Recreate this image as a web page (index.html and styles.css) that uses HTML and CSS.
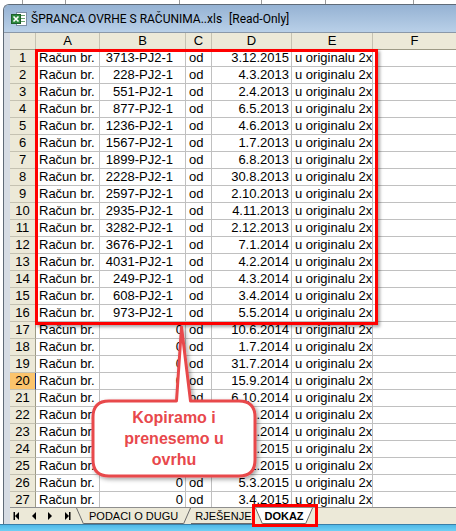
FILE: index.html
```html
<!DOCTYPE html>
<html lang="hr">
<head>
<meta charset="utf-8">
<title>ŠPRANCA OVRHE S RAČUNIMA..xls</title>
<link rel="stylesheet" href="styles.css">
</head>
<body>
<div class="backdrop">
  <div class="bk" style="width:23px"></div>
  <div class="bk" style="width:43px"></div>
  <div class="bk" style="width:114px"></div>
  <div class="bk" style="width:82px"></div>
  <div class="bk" style="width:64px"></div>
  <div class="bk" style="width:88px"></div>
</div>
<div class="window">
  <div class="titlebar">
    <svg class="xlicon" width="16" height="16" viewBox="0 0 16 16">
      <rect x="5.5" y="1.5" width="10" height="13" fill="#fff" stroke="#7d8fa6"/>
      <line x1="10" y1="4.5" x2="14" y2="4.5" stroke="#6aa36f"/>
      <line x1="10" y1="7.5" x2="14" y2="7.5" stroke="#6aa36f"/>
      <line x1="10" y1="10.5" x2="14" y2="10.5" stroke="#6aa36f"/>
      <rect x="0.5" y="3.5" width="9" height="9" fill="#2d8a3e" stroke="#1d5f2a"/>
      <path d="M2.5 5.5 L7.5 10.5 M7.5 5.5 L2.5 10.5" stroke="#fff" stroke-width="1.6"/>
    </svg>
    <span class="ttl">ŠPRANCA OVRHE S RAČUNIMA..xls</span>
    <span class="ro">[Read-Only]</span>
  </div>
  <div class="inner">
    <div class="sheet">
      <div class="h corner"></div><div class="h">A</div><div class="h">B</div><div class="h">C</div><div class="h">D</div><div class="h">E</div><div class="h last">F</div>

      <div class="rh">1</div><div class="c">Račun br.</div><div class="c r pr">3713-PJ2-1</div><div class="c">od</div><div class="c r">3.12.2015</div><div class="c">u originalu 2x</div><div class="c last"></div>
      <div class="rh">2</div><div class="c">Račun br.</div><div class="c r pr">228-PJ2-1</div><div class="c">od</div><div class="c r">4.3.2013</div><div class="c">u originalu 2x</div><div class="c last"></div>
      <div class="rh">3</div><div class="c">Račun br.</div><div class="c r pr">551-PJ2-1</div><div class="c">od</div><div class="c r">2.4.2013</div><div class="c">u originalu 2x</div><div class="c last"></div>
      <div class="rh">4</div><div class="c">Račun br.</div><div class="c r pr">877-PJ2-1</div><div class="c">od</div><div class="c r">6.5.2013</div><div class="c">u originalu 2x</div><div class="c last"></div>
      <div class="rh">5</div><div class="c">Račun br.</div><div class="c r pr">1236-PJ2-1</div><div class="c">od</div><div class="c r">4.6.2013</div><div class="c">u originalu 2x</div><div class="c last"></div>
      <div class="rh">6</div><div class="c">Račun br.</div><div class="c r pr">1567-PJ2-1</div><div class="c">od</div><div class="c r">1.7.2013</div><div class="c">u originalu 2x</div><div class="c last"></div>
      <div class="rh">7</div><div class="c">Račun br.</div><div class="c r pr">1899-PJ2-1</div><div class="c">od</div><div class="c r">6.8.2013</div><div class="c">u originalu 2x</div><div class="c last"></div>
      <div class="rh">8</div><div class="c">Račun br.</div><div class="c r pr">2228-PJ2-1</div><div class="c">od</div><div class="c r">30.8.2013</div><div class="c">u originalu 2x</div><div class="c last"></div>
      <div class="rh">9</div><div class="c">Račun br.</div><div class="c r pr">2597-PJ2-1</div><div class="c">od</div><div class="c r">2.10.2013</div><div class="c">u originalu 2x</div><div class="c last"></div>
      <div class="rh">10</div><div class="c">Račun br.</div><div class="c r pr">2935-PJ2-1</div><div class="c">od</div><div class="c r">4.11.2013</div><div class="c">u originalu 2x</div><div class="c last"></div>
      <div class="rh">11</div><div class="c">Račun br.</div><div class="c r pr">3282-PJ2-1</div><div class="c">od</div><div class="c r">2.12.2013</div><div class="c">u originalu 2x</div><div class="c last"></div>
      <div class="rh">12</div><div class="c">Račun br.</div><div class="c r pr">3676-PJ2-1</div><div class="c">od</div><div class="c r">7.1.2014</div><div class="c">u originalu 2x</div><div class="c last"></div>
      <div class="rh">13</div><div class="c">Račun br.</div><div class="c r pr">4031-PJ2-1</div><div class="c">od</div><div class="c r">4.2.2014</div><div class="c">u originalu 2x</div><div class="c last"></div>
      <div class="rh">14</div><div class="c">Račun br.</div><div class="c r pr">249-PJ2-1</div><div class="c">od</div><div class="c r">4.3.2014</div><div class="c">u originalu 2x</div><div class="c last"></div>
      <div class="rh">15</div><div class="c">Račun br.</div><div class="c r pr">608-PJ2-1</div><div class="c">od</div><div class="c r">3.4.2014</div><div class="c">u originalu 2x</div><div class="c last"></div>
      <div class="rh">16</div><div class="c">Račun br.</div><div class="c r pr">973-PJ2-1</div><div class="c">od</div><div class="c r">5.5.2014</div><div class="c">u originalu 2x</div><div class="c last"></div>
      <div class="rh">17</div><div class="c">Račun br.</div><div class="c r">0</div><div class="c">od</div><div class="c r">10.6.2014</div><div class="c">u originalu 2x</div><div class="c last"></div>
      <div class="rh">18</div><div class="c">Račun br.</div><div class="c r">0</div><div class="c">od</div><div class="c r">1.7.2014</div><div class="c">u originalu 2x</div><div class="c last"></div>
      <div class="rh">19</div><div class="c">Račun br.</div><div class="c r">0</div><div class="c">od</div><div class="c r">31.7.2014</div><div class="c">u originalu 2x</div><div class="c last"></div>
      <div class="rh sel">20</div><div class="c">Račun br.</div><div class="c r">0</div><div class="c">od</div><div class="c r">15.9.2014</div><div class="c">u originalu 2x</div><div class="c last"></div>
      <div class="rh">21</div><div class="c">Račun br.</div><div class="c r">0</div><div class="c">od</div><div class="c r">6.10.2014</div><div class="c">u originalu 2x</div><div class="c last"></div>
      <div class="rh">22</div><div class="c">Račun br.</div><div class="c r">0</div><div class="c">od</div><div class="c r">4.11.2014</div><div class="c">u originalu 2x</div><div class="c last"></div>
      <div class="rh">23</div><div class="c">Račun br.</div><div class="c r">0</div><div class="c">od</div><div class="c r">2.12.2014</div><div class="c">u originalu 2x</div><div class="c last"></div>
      <div class="rh">24</div><div class="c">Račun br.</div><div class="c r">0</div><div class="c">od</div><div class="c r">7.1.2015</div><div class="c">u originalu 2x</div><div class="c last"></div>
      <div class="rh">25</div><div class="c">Račun br.</div><div class="c r">0</div><div class="c">od</div><div class="c r">4.2.2015</div><div class="c">u originalu 2x</div><div class="c last"></div>
      <div class="rh">26</div><div class="c">Račun br.</div><div class="c r">0</div><div class="c">od</div><div class="c r">5.3.2015</div><div class="c">u originalu 2x</div><div class="c last"></div>
      <div class="rh">27</div><div class="c">Račun br.</div><div class="c r">0</div><div class="c">od</div><div class="c r">3.4.2015</div><div class="c">u originalu 2x</div><div class="c last"></div>
    </div>
    <div class="tabbar">
      <svg class="nav" width="66" height="16" viewBox="0 0 66 16">
        <rect x="3.5" y="4" width="1.5" height="8" fill="#000"/>
        <path d="M9 4 L9 12 L5 8 Z" fill="#000"/>
        <path d="M26 4 L26 12 L22 8 Z" fill="#000"/>
        <path d="M38 4 L38 12 L42 8 Z" fill="#000"/>
        <path d="M55 4 L55 12 L59 8 Z" fill="#000"/>
        <rect x="59" y="4" width="1.5" height="8" fill="#000"/>
      </svg>
      <svg class="edge" width="8" height="16" viewBox="0 0 8 16"><path d="M0.5 0 L7.5 16" stroke="#6b6b6b" fill="none"/></svg>
      <span class="tab t1">PODACI O DUGU</span>
      <svg class="edge" width="8" height="16" viewBox="0 0 8 16"><path d="M0.5 16 L7.5 0" stroke="#6b6b6b" fill="none"/></svg>
      <span class="tab t2">RJEŠENJE</span>
      <svg class="edge" width="8" height="16" viewBox="0 0 8 16"><path d="M0 0 L8 0 L8 16 Z" fill="#fff"/><path d="M0.5 0 L7.5 16" stroke="#6b6b6b" fill="none"/></svg>
      <span class="tab active">DOKAZ</span>
      <svg class="edge" width="8" height="16" viewBox="0 0 8 16"><path d="M0 0 L8 0 L0 16 Z" fill="#fff"/><path d="M0.5 16 L7.5 0" stroke="#6b6b6b" fill="none"/></svg>
    </div>
  </div>
</div>
<div class="bottombar"></div>

<div class="redbox"></div>
<div class="redtab"></div>

<svg class="callout-shape" width="456" height="531" viewBox="0 0 456 531">
  <defs>
    <filter id="sh" x="-10%" y="-10%" width="130%" height="130%">
      <feDropShadow dx="2" dy="2" stdDeviation="2" flood-color="#000" flood-opacity="0.35"/>
    </filter>
  </defs>
  <path d="M109 401 H176.5 L181.5 327 L190.5 401 H239 Q255 401 255 417 V460 Q255 476 239 476 H109 Q93 476 93 460 V417 Q93 401 109 401 Z" fill="#fff" stroke="#e8484c" stroke-width="3" stroke-linejoin="round" filter="url(#sh)"/>
</svg>
<div class="callout-text">Kopiramo i<br>prenesemo u<br>ovrhu</div>
</body>
</html>
```
FILE: styles.css
```css
* { box-sizing: border-box; }
html, body { margin: 0; padding: 0; }
body {
  width: 456px;
  height: 531px;
  overflow: hidden;
  position: relative;
  background: #fff;
  font-family: "Liberation Sans", Arial, sans-serif;
  color: #000;
}

.backdrop {
  height: 4px;
  display: flex;
  background: #fff;
}
.bk { border-right: 1px solid #9a9a9a; height: 4px; }

.window {
  margin-left: 3px;
  height: 520px;
  border-left: 1px solid #5f6b78;
  border-top: 1px solid #5f6b78;
  border-top-left-radius: 6px;
  background: #d6dce4;
  display: flex;
  flex-direction: column;
  overflow: hidden;
}

.titlebar {
  height: 28px;
  flex: none;
  display: flex;
  align-items: center;
  padding-left: 7px;
  background: linear-gradient(#95b2d3, #b9d0e8);
  border-bottom: 1px solid #8a98a8;
  font-family: Roboto, "Liberation Sans", sans-serif;
  font-size: 12px;
  color: #000;
}
.xlicon { flex: none; margin-right: 4px; margin-top: 1px; }
.ttl { white-space: nowrap; }
.ro { margin-left: 7px; white-space: nowrap; }

.inner {
  padding-left: 6px;
  display: flex;
  flex-direction: column;
  flex: 1;
  min-height: 0;
}

.sheet {
  display: grid;
  grid-template-columns: 26px 64px 86px 26px 80px 81px 83px;
  grid-auto-rows: 17px;
  height: 474px;
  overflow: hidden;
  background: #fff;
  flex: none;
}

.h {
  background: #ece9d8;
  border-right: 1px solid #c5c2b2;
  border-bottom: 1px solid #9d9a86;
  text-align: center;
  font-size: 13px;
  line-height: 16px;
}
.h.last { border-right: none; }

.rh {
  background: #ece9d8;
  border-right: 1px solid #9d9a86;
  border-bottom: 1px solid #c5c2b2;
  text-align: center;
  font-size: 13px;
  line-height: 16px;
}
.rh.sel { background: #fbc46c; border-right-color: #1d3b8f; }

.c {
  border-right: 1px solid #c0c0c0;
  border-bottom: 1px solid #c0c0c0;
  font-size: 13px;
  line-height: 16px;
  padding: 0 2px 0 3px;
  white-space: nowrap;
  overflow: hidden;
}
.c.last { border-right: none; }
.r { text-align: right; }
.pr { padding-right: 12px; }

.tabbar {
  height: 17px;
  flex: none;
  display: flex;
  align-items: flex-start;
  background: #ece9d8;
  border-top: 1px solid #8e8e8e;
  font-size: 11px;
  line-height: 16px;
}
.nav { flex: none; }
.edge { flex: none; display: block; }
.tab {
  height: 16px;
  white-space: nowrap;
  border-bottom: 1px solid #6b6b6b;
}
.t1 { padding: 0 5px 0 5px; }
.t2 { padding: 0 4px 0 4px; }
.active { background: #fff; font-weight: bold; padding: 0 1px; }

.bottombar {
  height: 7px;
  background: linear-gradient(#4fb8e6, #6fd0f4);
  border-top: 1px solid #3a7fa8;
}

.redbox {
  position: absolute;
  left: 35px;
  top: 49px;
  width: 343px;
  height: 276px;
  border: 3px solid #ff0000;
  box-shadow: 2px 2px 3px rgba(0, 0, 0, 0.35);
}
.redtab {
  position: absolute;
  left: 252px;
  top: 504px;
  width: 66px;
  height: 23px;
  border: 3px solid #ff0000;
}

.callout-shape {
  position: absolute;
  left: 0;
  top: 0;
  pointer-events: none;
}
.callout-text {
  position: absolute;
  left: 93px;
  top: 401px;
  width: 162px;
  height: 75px;
  display: flex;
  align-items: center;
  justify-content: center;
  text-align: center;
  color: #e8484c;
  font-weight: bold;
  font-size: 16px;
  line-height: 21px;
}
```
